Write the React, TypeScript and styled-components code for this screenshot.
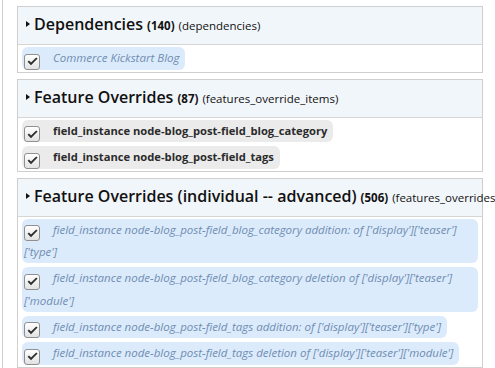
import { FC } from 'react';
import styled, { createGlobalStyle } from 'styled-components';

const GlobalStyle = createGlobalStyle`
  html, body {
    margin: 0;
    padding: 0;
    background: #fff;
    overflow: hidden;
  }

  body {
    font-family: 'Open Sans', 'Noto Sans', sans-serif;
    color: #111;
  }
`;

const Page = styled.div`
  width: 495px;
  height: 368px;
  box-sizing: border-box;
  margin-left: 2px;
  border-left: 1px solid #cfcfcf;
  padding: 6px 0 0 14px;
`;

const Fieldset = styled.section`
  width: 466px;
  box-sizing: border-box;
  border: 1px solid #cfcfcf;
  margin-bottom: 6px;
`;

const Legend = styled.div`
  display: flex;
  align-items: baseline;
  height: 38px;
  box-sizing: border-box;
  padding: 6px 0 0 8px;
  background: #f1f6fa;
  border-bottom: 1px solid #d6d6d6;
  white-space: nowrap;
`;

const Arrow = styled.span`
  display: inline-block;
  width: 0;
  height: 0;
  margin-right: 4px;
  border-top: 3px solid transparent;
  border-bottom: 3px solid transparent;
  border-left: 4px solid #111;
  transform: translateY(-3px);
`;

const Title = styled.span`
  font-size: 16px;
  font-weight: 600;
`;

const Count = styled.span`
  margin-left: 4px;
  font-size: 11.5px;
  font-weight: 700;
`;

const MachineName = styled.span`
  margin-left: 4px;
  font-size: 11.5px;
  font-weight: 400;
`;

const Items = styled.div`
  display: flex;
  flex-direction: column;
  align-items: flex-start;
  gap: 4px;
  padding: 2px 4px 2px;
`;

interface PillProps {
  $variant: 'blue' | 'gray';
}

const Pill = styled.div<PillProps>`
  box-sizing: border-box;
  max-width: 100%;
  padding: 0 6px 0 2px;
  border-radius: 6px;
  line-height: 22px;
  font-size: ${({ $variant }) => ($variant === 'blue' ? '11.5px' : '11.2px')};
  background: ${({ $variant }) => ($variant === 'blue' ? '#dcebfb' : '#ebebeb')};
  color: ${({ $variant }) => ($variant === 'blue' ? '#6f8db2' : '#2b2b2b')};
  font-style: ${({ $variant }) => ($variant === 'blue' ? 'italic' : 'normal')};
  font-weight: ${({ $variant }) => ($variant === 'blue' ? 400 : 700)};
`;

const Box = styled.span`
  display: inline-flex;
  align-items: center;
  justify-content: center;
  width: 16px;
  height: 16px;
  box-sizing: border-box;
  margin-right: 13px;
  vertical-align: -4px;
  border: 1px solid #8f8f8f;
  border-radius: 3px;
  background: linear-gradient(180deg, #ffffff 0%, #e2e2e2 100%);
`;

const Check: FC = () => (
  <Box>
    <svg width="11" height="9" viewBox="0 0 11 9">
      <path d="M0.6 4.8 L4 8.2 L10.6 1.6 L9.2 0.4 L4 5.6 L2 3.4 Z" fill="#2e2e2e" />
    </svg>
  </Box>
);

type Group = {
  title: string;
  count: number;
  machine: string;
  variant: 'blue' | 'gray';
  items: string[];
};

const groups: Group[] = [
  {
    title: 'Dependencies',
    count: 140,
    machine: 'dependencies',
    variant: 'blue',
    items: ['Commerce Kickstart Blog'],
  },
  {
    title: 'Feature Overrides',
    count: 87,
    machine: 'features_override_items',
    variant: 'gray',
    items: [
      'field_instance node-blog_post-field_blog_category',
      'field_instance node-blog_post-field_tags',
    ],
  },
  {
    title: 'Feature Overrides (individual -- advanced)',
    count: 506,
    machine: 'features_overrides',
    variant: 'blue',
    items: [
      "field_instance node-blog_post-field_blog_category addition: of ['display']['teaser']['type']",
      "field_instance node-blog_post-field_blog_category deletion of ['display']['teaser']['module']",
      "field_instance node-blog_post-field_tags addition: of ['display']['teaser']['type']",
      "field_instance node-blog_post-field_tags deletion of ['display']['teaser']['module']",
    ],
  },
];

const App: FC = () => (
  <>
    <GlobalStyle />
    <Page>
      {groups.map((group) => (
        <Fieldset key={group.machine}>
          <Legend>
            <Arrow />
            <Title>{group.title}</Title>
            <Count>({group.count})</Count>
            <MachineName>({group.machine})</MachineName>
          </Legend>
          <Items>
            {group.items.map((item) => (
              <Pill $variant={group.variant} key={item}>
                <Check />
                {item}
              </Pill>
            ))}
          </Items>
        </Fieldset>
      ))}
    </Page>
  </>
);

export default App;
